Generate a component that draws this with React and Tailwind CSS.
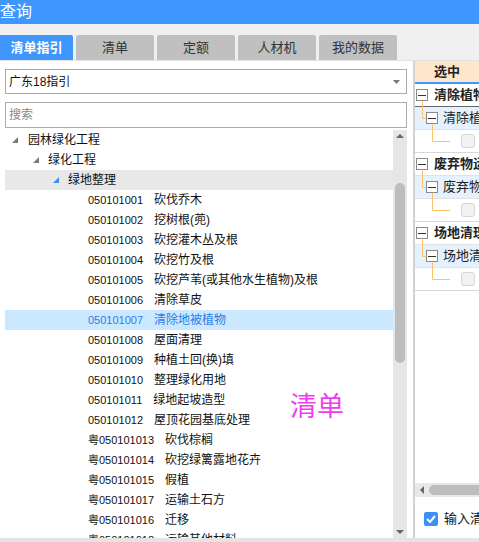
import React from 'react';

const items = [
  ['050101001', '砍伐乔木'],
  ['050101002', '挖树根(蔸)'],
  ['050101003', '砍挖灌木丛及根'],
  ['050101004', '砍挖竹及根'],
  ['050101005', '砍挖芦苇(或其他水生植物)及根'],
  ['050101006', '清除草皮'],
  ['050101007', '清除地被植物'],
  ['050101008', '屋面清理'],
  ['050101009', '种植土回(换)填'],
  ['050101010', '整理绿化用地'],
  ['050101011', '绿地起坡造型'],
  ['050101012', '屋顶花园基底处理'],
  ['粤050101013', '砍伐棕榈'],
  ['粤050101014', '砍挖绿篱露地花卉'],
  ['粤050101015', '假植'],
  ['粤050101017', '运输土石方'],
  ['粤050101016', '迁移'],
  ['粤050101018', '运输其他材料'],
];

const groups = [
  ['清除植物', '清除植被'],
  ['废弃物运输', '废弃物运输'],
  ['场地清理', '场地清理'],
];

const tabs = ['清单', '定额', '人材机', '我的数据'];

function Tri({ color }) {
  return (
    <svg width="6" height="6" viewBox="0 0 6 6" className="shrink-0">
      <polygon points="6,0 6,6 0,6" fill={color} />
    </svg>
  );
}

function MinusBox() {
  return (
    <div className="w-[12px] h-[12px] border border-[#8a8a8a] bg-white flex items-center justify-center shrink-0">
      <div className="w-[8px] h-px bg-[#333]" />
    </div>
  );
}

function Group({ title, sub, first }) {
  return (
    <div className="relative">
      <svg className="absolute left-0 top-0 pointer-events-none" width="40" height="69">
        <path d="M7.5 17.5 V34.5 H11" stroke="#ffc168" fill="none" />
        <path d="M17.5 40.5 V57.5 H35" stroke="#ffc168" fill="none" />
      </svg>
      <div className={`h-[23px] flex items-center pl-[1px] border-b ${first ? 'border-[#666]' : 'border-[#e2e2e2]'}`}>
        <MinusBox />
        <span className="ml-[6px] text-[13px] font-bold text-[#222] whitespace-nowrap">{title}</span>
      </div>
      <div className="h-[23px] flex items-center pl-[11px] bg-[#e5f2fd] border-b border-[#e2e2e2]">
        <MinusBox />
        <span className="ml-[5px] text-[13px] text-[#222] whitespace-nowrap">{sub}</span>
      </div>
      <div className="h-[23px] flex items-center pl-[46px] border-b border-[#d8d8d8]">
        <div className="w-[14px] h-[14px] rounded-[3px] border border-[#d6d6d6] bg-[#f2f2f2]" />
      </div>
    </div>
  );
}

export default function App() {
  return (
    <div className="w-[479px] h-[542px] overflow-hidden bg-white relative flex flex-col font-['Liberation_Sans','Noto_Sans_CJK_SC',sans-serif] text-[#111]">
      {/* title */}
      <div className="h-[24px] bg-[#3f97fd] text-white text-[16px] leading-[24px] shrink-0">查询</div>
      <div className="h-[11px] bg-[#f0f0f0] shrink-0" />

      {/* tabs */}
      <div className="h-[26px] bg-[#f0f0f0] flex items-start gap-[3px] border-b border-[#e2e2e2] shrink-0">
        <div className="w-[73px] h-[25px] bg-[#3f97fd] text-white font-bold text-[13px] flex items-center justify-center rounded-tr-[2px]">
          清单指引
        </div>
        {tabs.map((t) => (
          <div
            key={t}
            className="w-[78px] h-[25px] bg-[#c0c0c0] text-[#333] text-[13px] flex items-center justify-center rounded-t-[2px]"
          >
            {t}
          </div>
        ))}
      </div>

      {/* body */}
      <div className="flex flex-1 min-h-0">
        {/* left */}
        <div className="w-[407px] pl-[5px] flex flex-col shrink-0">
          <div className="mt-[8px] h-[25px] border border-[#ababab] flex items-center justify-between pl-[3px] pr-[6px] text-[12px]">
            <span>广东18指引</span>
            <svg width="7" height="4" viewBox="0 0 7 4">
              <polygon points="0,0 7,0 3.5,4" fill="#777" />
            </svg>
          </div>
          <div className="mt-[8px] h-[26px] border border-[#ababab] flex items-center pl-[3px] text-[12px] text-[#8a8a8a]">
            搜索
          </div>
          <div className="mt-[2px] flex flex-1 min-h-0">
            <div className="flex-1 overflow-hidden text-[12px]">
              <div className="h-[20px] flex items-center pl-[7px]">
                <Tri color="#7a7a7a" />
                <span className="ml-[10px]">园林绿化工程</span>
              </div>
              <div className="h-[20px] flex items-center pl-[28px]">
                <Tri color="#7a7a7a" />
                <span className="ml-[9px]">绿化工程</span>
              </div>
              <div className="h-[20px] flex items-center pl-[48px] bg-[#e8e8e8]">
                <Tri color="#3d8ff5" />
                <span className="ml-[9px]">绿地整理</span>
              </div>
              {items.map(([code, name]) => {
                const sel = code === '050101007';
                return (
                  <div
                    key={code}
                    className={`h-[20px] flex items-center pl-[83px] whitespace-nowrap ${sel ? 'bg-[#cce8ff] text-[#2a7ee8]' : ''}`}
                  >
                    <span className="text-[11px]">{code}</span>
                    <span className="ml-[11px] text-[12px]">{name}</span>
                  </div>
                );
              })}
            </div>
            {/* vertical scrollbar */}
            <div className="w-[14px] bg-[#e6e6e6] flex flex-col items-center shrink-0">
              <svg width="8" height="4" viewBox="0 0 8 4" className="mt-[4px]">
                <polygon points="0,4 8,4 4,0" fill="#666" />
              </svg>
              <div className="mt-[45px] w-[10px] h-[180px] rounded-full bg-[#bdbdbd]" />
              <div className="flex-1" />
              <svg width="8" height="4" viewBox="0 0 8 4" className="mb-[4px]">
                <polygon points="0,0 8,0 4,4" fill="#666" />
              </svg>
            </div>
          </div>
        </div>

        {/* gap */}
        <div className="w-[6px] shrink-0" />

        {/* right */}
        <div className="flex-1 min-w-0 border-l-2 border-[#d2d2d2] flex flex-col overflow-hidden">
          <div className="h-[23px] bg-[#fde6c9] border-b-2 border-[#3f97fd] flex items-center justify-center text-[13px] font-bold text-[#222] shrink-0">
            选中
          </div>
          {groups.map(([t, s], i) => (
            <Group key={t} title={t} sub={s} first={i === 0} />
          ))}
          <div className="flex-1" />
          <div className="h-[14px] bg-[#e8e8e8] flex items-center shrink-0">
            <svg width="4" height="8" viewBox="0 0 4 8" className="ml-[5px]">
              <polygon points="4,0 4,8 0,4" fill="#666" />
            </svg>
            <div className="ml-[5px] flex-1 h-[10px] rounded-l-full bg-[#bdbdbd]" />
          </div>
          <div className="h-[41px] pt-[15px] pl-[9px] flex items-start shrink-0">
            <div className="w-[14px] h-[14px] rounded-[2px] bg-[#3d8ff5] flex items-center justify-center shrink-0">
              <svg width="10" height="8" viewBox="0 0 10 8">
                <path d="M1 4 L4 7 L9 1" stroke="white" strokeWidth="2" fill="none" />
              </svg>
            </div>
            <span className="ml-[6px] text-[13px] leading-[14px] whitespace-nowrap">输入清单编码</span>
          </div>
        </div>
      </div>

      <div className="h-[4px] bg-[#e4e4e4] shrink-0" />

      {/* watermark */}
      <div className="absolute left-[290px] top-[394px] text-[27px] text-[#f03cf0] leading-none">清单</div>
    </div>
  );
}
